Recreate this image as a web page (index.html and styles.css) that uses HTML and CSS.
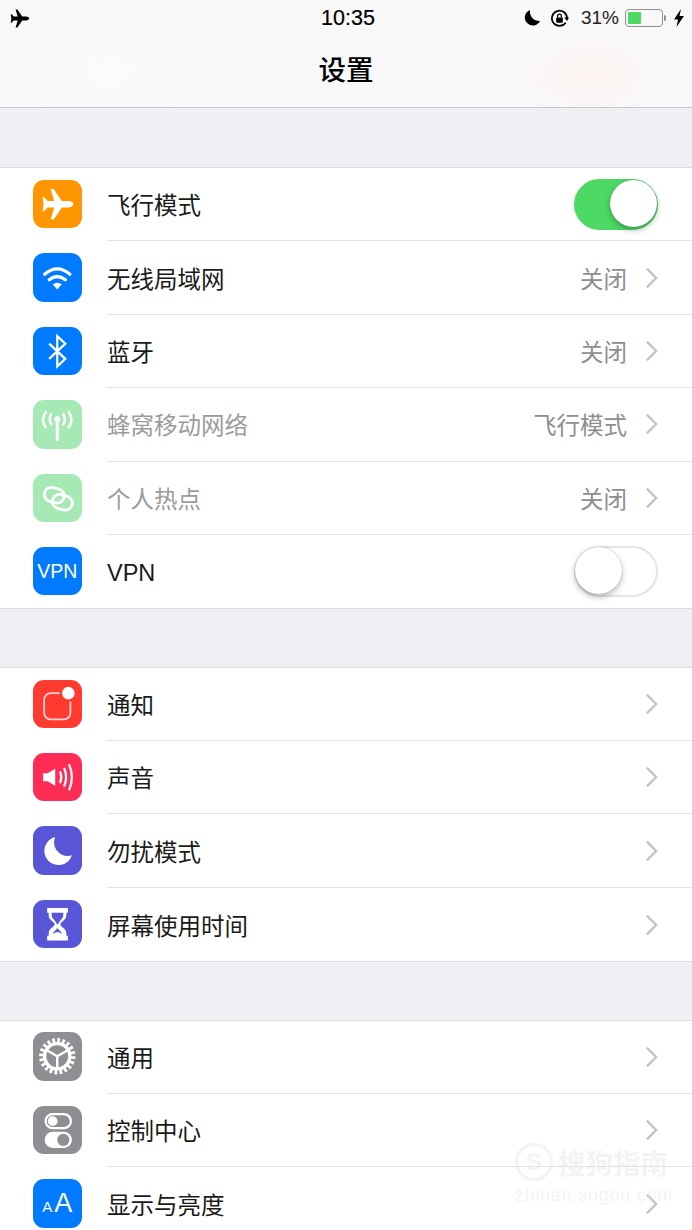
FILE: index.html
```html
<!DOCTYPE html>
<html lang="zh">
<head>
<meta charset="UTF-8">
<title>设置</title>
<link rel="stylesheet" href="styles.css">
</head>
<body>

<svg class="defs" width="0" height="0">
	<symbol id="plane" viewBox="0 0 48 48">
		<path d="M40 24c0-1.800-2.500-3.200-5-3.200h-6.500L20.500 9h-3l3.500 11.800h-6.500L11 17H9.500l1 7-1 7H11l3.500-3.800H21L17.500 39h3l8-11.800H35c2.500 0 5-1.400 5-3.200z"/>
	</symbol>
	<symbol id="chev" viewBox="0 0 14 24">
		<path d="M2 2l10 10L2 22" fill="none" stroke="#c4c4c8" stroke-width="2.600"/>
	</symbol>
</svg>

<header class="topbar">
	<div class="status">
		<svg class="st-plane"><use href="#plane"/></svg>
		<div class="st-time">10:35</div>
		<div class="st-right">
			<svg class="st-moon" viewBox="0 0 16 16"><path d="M6 0a8 8 0 1 0 10 11A9.500 9.500 0 0 1 6 0z"/></svg>
			<svg class="st-lock" viewBox="0 0 20 20">
				<path d="M16.500 14.500A8 8 0 1 1 18 10" fill="none" stroke="#000" stroke-width="1.800"/>
				<path d="M15 9l3 3.500 2-3.500z"/>
				<rect x="6.500" y="9" width="7" height="5.500" rx="1"/>
				<path d="M8 9V7.500a2 2 0 0 1 4 0V9" fill="none" stroke="#000" stroke-width="1.300"/>
			</svg>
			<span class="st-pct">31%</span>
			<div class="battery"><div class="battery-fill"></div></div>
			<div class="battery-nub"></div>
			<svg class="st-bolt" viewBox="0 0 10 18"><path d="M7 0L0 10.500h4L2.500 18 10 7H5.500z"/></svg>
		</div>
	</div>
	<h1 class="title">设置</h1>
</header>

<main>
	<section class="group">
		<div class="row">
			<div class="icon orange"><svg viewBox="0 0 48 48" fill="#fff"><use href="#plane"/></svg></div>
			<div class="row-body"><span class="label">飞行模式</span><div class="toggle on"><div class="knob"></div></div></div>
		</div>
		<div class="row">
			<div class="icon blue"><svg viewBox="0 0 48 48"><path d="M11.500 21Q24 10.500 36.500 21M16 26.500Q24 20 32 26.500" fill="none" stroke="#fff" stroke-width="3.200" stroke-linecap="round"/><path d="M19.500 31Q24 28 28.500 31L24 36z" fill="#fff"/></svg></div>
			<div class="row-body"><span class="label">无线局域网</span><span class="value">关闭</span><svg class="chev"><use href="#chev"/></svg></div>
		</div>
		<div class="row">
			<div class="icon blue"><svg viewBox="0 0 48 48"><path d="M16 16.500L32 31.500 24 39V9l8 7.500L16 31.500" fill="none" stroke="#fff" stroke-width="2.200"/></svg></div>
			<div class="row-body"><span class="label">蓝牙</span><span class="value">关闭</span><svg class="chev"><use href="#chev"/></svg></div>
		</div>
		<div class="row dim">
			<div class="icon pale"><svg viewBox="0 0 48 48"><circle cx="24" cy="19" r="3" fill="#fff"/><path d="M24 20v19" stroke="#fff" stroke-width="3" stroke-linecap="round"/><path d="M18 14q-3 5 0 10M30 14q3 5 0 10M12.500 12q-5 7.500 0 15M35.500 12q5 7.500 0 15" fill="none" stroke="#fff" stroke-width="2.400" stroke-linecap="round"/></svg></div>
			<div class="row-body"><span class="label">蜂窝移动网络</span><span class="value">飞行模式</span><svg class="chev"><use href="#chev"/></svg></div>
		</div>
		<div class="row dim">
			<div class="icon pale"><svg viewBox="0 0 48 48" fill="none" stroke="#fff" stroke-width="2.800"><rect x="11" y="14" width="20" height="14" rx="7" transform="rotate(15 21 21)"/><rect x="19" y="21" width="20" height="14" rx="7" transform="rotate(15 29 28)"/></svg></div>
			<div class="row-body"><span class="label">个人热点</span><span class="value">关闭</span><svg class="chev"><use href="#chev"/></svg></div>
		</div>
		<div class="row">
			<div class="icon blue icon-vpn">VPN</div>
			<div class="row-body"><span class="label label-latin">VPN</span><div class="toggle"><div class="knob"></div></div></div>
		</div>
	</section>

	<section class="group">
		<div class="row">
			<div class="icon red"><svg viewBox="0 0 48 48"><rect x="11" y="13" width="26" height="26" rx="6.500" fill="none" stroke="#ffd2ce" stroke-width="1.800"/><circle cx="35" cy="13" r="8.500" fill="#ff3b30"/><circle cx="35" cy="13" r="6.200" fill="#fff"/></svg></div>
			<div class="row-body"><span class="label">通知</span><svg class="chev"><use href="#chev"/></svg></div>
		</div>
		<div class="row">
			<div class="icon pink"><svg viewBox="0 0 48 48"><path d="M10 20h4.500l7.500-4.500v17L14.500 28H10z" fill="#fff"/><path d="M27 19q2 5 0 10M31 15.500q3.500 8.500 0 17M36 12q5 12 0 24" fill="none" stroke="#fff" stroke-width="2.200" stroke-linecap="round"/></svg></div>
			<div class="row-body"><span class="label">声音</span><svg class="chev"><use href="#chev"/></svg></div>
		</div>
		<div class="row">
			<div class="icon indigo"><svg viewBox="0 0 48 48"><path d="M22 11A14 14 0 1 0 38.500 29 13.500 13.500 0 0 1 22 11z" fill="#fff"/></svg></div>
			<div class="row-body"><span class="label">勿扰模式</span><svg class="chev"><use href="#chev"/></svg></div>
		</div>
		<div class="row">
			<div class="icon indigo"><svg viewBox="0 0 48 48"><path d="M14 8h20.500v4.500H33V15c0 5-5.500 6-6 9 .5 3 6 4 6 9v2.500h1.500V40H14v-4.500h1.500V33c0-5 5.500-6 6-9-.5-3-6-4-6-9v-2.500H14z" fill="#fff"/><path d="M18.500 12.500H30V15c0 3.500-4.500 5.500-5 9h-1.500c-.5-3.500-5-5.500-5-9z" fill="#5856d6"/><path d="M24.200 27c-.3 2.500-3.700 3.500-4.700 7 1.500-1.500 3.200-2 4.700-2s3.200.5 4.700 2c-1-3.500-4.400-4.500-4.700-7z" fill="#5856d6"/></svg></div>
			<div class="row-body"><span class="label">屏幕使用时间</span><svg class="chev"><use href="#chev"/></svg></div>
		</div>
	</section>

	<section class="group">
		<div class="row">
			<div class="icon gray"><svg viewBox="0 0 48 48" fill="none" stroke="#fff"><circle cx="24" cy="24" r="15.500" stroke-width="5" pathLength="40" stroke-dasharray="1.100 0.900"/><circle cx="24" cy="24" r="12.500" stroke-width="3.400"/><path d="M24 24v12M24 24L13.600 18M24 24l10.400-6" stroke-width="2.400"/></svg></div>
			<div class="row-body"><span class="label">通用</span><svg class="chev"><use href="#chev"/></svg></div>
		</div>
		<div class="row">
			<div class="icon gray"><svg viewBox="0 0 48 48"><rect x="12.500" y="8" width="25" height="14" rx="7" fill="none" stroke="#fff" stroke-width="2.200"/><circle cx="19.500" cy="15" r="4.800" fill="#fff"/><rect x="11.500" y="25.500" width="27" height="16" rx="8" fill="#fff"/><circle cx="30" cy="33.500" r="6" fill="#8e8e93"/></svg></div>
			<div class="row-body"><span class="label">控制中心</span><svg class="chev"><use href="#chev"/></svg></div>
		</div>
		<div class="row">
			<div class="icon blue icon-text"><span class="aa-small">A</span><span class="aa-big">A</span></div>
			<div class="row-body"><span class="label">显示与亮度</span><svg class="chev"><use href="#chev"/></svg></div>
		</div>
	</section>
</main>

<div class="watermark">
	<div class="wm-top"><span class="wm-logo">S</span><span class="wm-name">搜狗指南</span></div>
	<div class="wm-url">zhinan.sogou.com</div>
</div>

</body>
</html>
```

FILE: styles.css
```css
html, body {
	margin: 0;
	padding: 0;
}

body {
	position: relative;
	height: 1230px;
	overflow: hidden;
	background-color: #efeff4;
	font-family: "Liberation Sans", "Noto Sans CJK SC", sans-serif;
	color: #000;
}

.defs {
	position: absolute;
}

/* top bar */
.topbar {
	height: 107px;
	border-bottom: 1px solid #c9c9cd;
	background-color: #f8f8f8;
	background-image:
		radial-gradient(ellipse 80px 45px at 590px 75px, #fdf4f3 0%, rgba(253, 244, 243, 0) 100%),
		radial-gradient(ellipse 110px 50px at 110px 70px, #fbfbfb 0%, rgba(251, 251, 251, 0) 100%);
}

.status {
	display: grid;
	grid-template-columns: 1fr auto 1fr;
	align-items: center;
	height: 36px;
	padding: 0 8px;
}

.st-plane {
	width: 29px;
	height: 29px;
	margin-left: -3px;
}

.st-time {
	margin-left: 4px;
	font-size: 21.500px;
	-webkit-text-stroke: 0.2px #000;
}

.st-right {
	display: flex;
	align-items: center;
	justify-content: flex-end;
}

.st-moon {
	width: 16px;
	height: 16px;
	margin-right: 10px;
}

.st-lock {
	width: 19px;
	height: 19px;
	margin-right: 12px;
}

.st-pct {
	font-size: 19px;
	color: #222;
	margin-right: 6px;
}

.battery {
	box-sizing: border-box;
	width: 38px;
	height: 18px;
	padding: 2px;
	border: 1.500px solid #8f8f8f;
	border-radius: 4px;
}

.battery-fill {
	width: 13px;
	height: 100%;
	background-color: #4cd964;
	border-radius: 1px;
}

.battery-nub {
	width: 2px;
	height: 6px;
	margin-left: 1px;
	background-color: #8f8f8f;
	border-radius: 0 2px 2px 0;
}

.st-bolt {
	width: 10px;
	height: 18px;
	margin-left: 8px;
}

.title {
	margin: 0;
	text-align: center;
	font-size: 27.500px;
	font-weight: 500;
	line-height: 70px;
}

/* groups and rows */
.group {
	margin-top: 59.300px;
	background-color: #fff;
	box-shadow: 0 -1px 0 #dedee1, 0 1px 0 #dedee1;
}

.group:first-child {
	margin-top: 60px;
}

.row {
	display: flex;
	align-items: center;
	height: 73.400px;
	padding-left: 33px;
}

.row-body {
	flex: 1;
	display: flex;
	align-items: center;
	align-self: stretch;
	margin-left: 25.500px;
	padding-right: 34px;
	border-bottom: 1px solid #e2e2e4;
}

.row:last-child .row-body {
	border-bottom: 0;
}

.label {
	flex: 1;
	font-size: 23.500px;
	color: #1a1a1a;
}

.label-latin {
	padding-top: 3px;
}

.dim .label {
	color: #9b9b9b;
}

.value {
	font-size: 23.500px;
	color: #8e8e93;
	margin-right: 18px;
}

.chev {
	width: 13px;
	height: 24px;
}

/* icons */
.icon {
	flex: none;
	width: 48.500px;
	height: 48.500px;
	margin-top: -1px;
	border-radius: 11px;
	display: flex;
	align-items: center;
	justify-content: center;
	color: #fff;
}

.icon svg {
	width: 100%;
	height: 100%;
}

.orange { background-color: #ff9500; }
.blue { background-color: #007aff; }
.pale { background-color: #a6e9b4; }
.red { background-color: #ff3b30; }
.pink { background-color: #ff2d55; }
.indigo { background-color: #5856d6; }
.gray { background-color: #8e8e93; }

.icon-vpn {
	font-size: 19.500px;
}

.icon-text {
	align-items: baseline;
	line-height: 49px;
}

.aa-small {
	font-size: 15px;
	margin-right: 2px;
}

.aa-big {
	font-size: 27px;
}

/* switches */
.toggle {
	box-sizing: border-box;
	position: relative;
	width: 84px;
	height: 51px;
	border-radius: 26px;
	border: 2px solid #e5e5e5;
	background-color: #fff;
}

.toggle .knob {
	position: absolute;
	top: -1px;
	left: -1px;
	width: 47px;
	height: 47px;
	border-radius: 50%;
	background-color: #fff;
	box-shadow: 0 3px 6px rgba(0, 0, 0, 0.28), 0 0 1px rgba(0, 0, 0, 0.3);
}

.toggle.on {
	border-color: #4cd964;
	background-color: #4cd964;
}

.toggle.on .knob {
	left: auto;
	right: -1px;
}

/* watermark */
.watermark {
	position: absolute;
	left: 515px;
	top: 1142px;
	color: rgba(232, 232, 232, 0.5);
	filter: blur(0.7px);
}

.wm-top {
	display: flex;
	align-items: center;
}

.wm-logo {
	box-sizing: border-box;
	width: 38px;
	height: 38px;
	margin-right: 5px;
	border: 3px solid rgba(232, 232, 232, 0.5);
	border-radius: 50%;
	text-align: center;
	font-size: 24px;
	font-weight: bold;
	line-height: 32px;
}

.wm-name {
	font-size: 27.500px;
	font-weight: bold;
}

.wm-url {
	margin-top: 3px;
	font-size: 17.500px;
	letter-spacing: 1px;
}
```
